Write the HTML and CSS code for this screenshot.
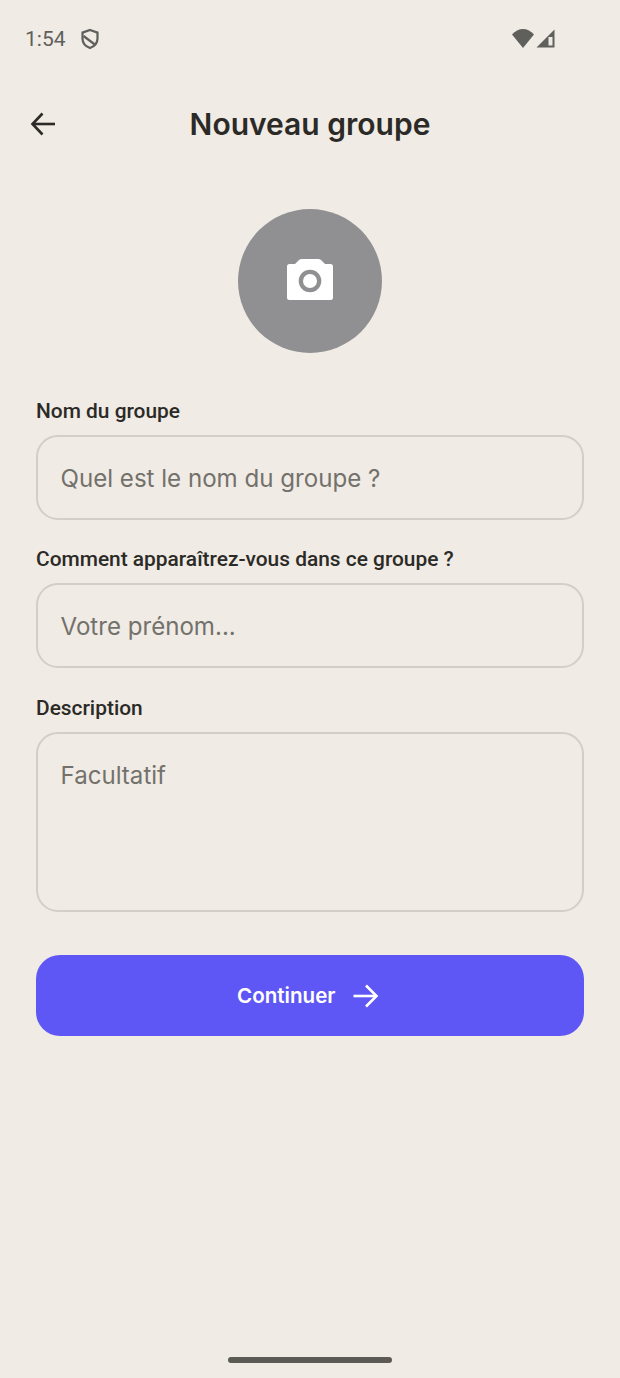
FILE: index.html
```html
<!DOCTYPE html>
<html lang="fr">
<head>
  <meta charset="UTF-8">
  <title>Nouveau groupe</title>
  <meta name="viewport" content="width=device-width, initial-scale=1.0">
  <link rel="stylesheet" href="styles.css">
</head>
<body>
  <div class="screen">

    <div class="status-bar">
      <div class="status-left">
        <span class="clock">1:54</span>
        <svg class="shield" width="20" height="22" viewBox="0 0 20 22" fill="none" stroke="#5f5f5c" stroke-width="2.2">
          <path d="M10 2 L17.5 4.6 V10.5 C17.5 15 14.4 18.4 10 20 C5.6 18.4 2.5 15 2.5 10.5 V4.6 Z"/>
          <path d="M3.5 8 L15.5 17"/>
        </svg>
      </div>
      <div class="status-right">
        <svg width="22" height="19" viewBox="0 0 22 19"><path d="M0 5.5 C3 2 7 0 11 0 C15 0 19 2 22 5.5 L11 19 Z" fill="#5f5f5c"/></svg>
        <svg width="19" height="19" viewBox="0 0 19 19">
          <path d="M18.5 0.5 V18.5 H0.5 Z" fill="#5f5f5c"/>
          <rect x="12.5" y="8" width="4" height="8.5" fill="#f0ebe4"/>
        </svg>
      </div>
    </div>

    <header class="top-bar">
      <button class="back-btn">
        <svg width="26" height="26" viewBox="0 0 26 26" fill="none" stroke="#2b2a27" stroke-width="2.6">
          <path d="M25 13 H3"/>
          <path d="M12.5 2.5 L2.5 13 L12.5 23.5"/>
        </svg>
      </button>
      <h1>Nouveau groupe</h1>
    </header>

    <div class="avatar-wrap">
      <div class="avatar">
        <svg class="camera" width="46" height="41" viewBox="0 0 46 41">
          <path fill-rule="evenodd" fill="#fff" d="M2.5 5 H8 L12 1 Q13 0 15 0 H31 Q33 0 34 1 L38 5 H43.5 Q46 5 46 7.5 V38.5 Q46 41 43.5 41 H2.5 Q0 41 0 38.5 V7.5 Q0 5 2.5 5 Z M23 10.7 A11.3 11.3 0 1 0 23 33.3 A11.3 11.3 0 1 0 23 10.7 Z"/>
          <circle cx="23" cy="22" r="7" fill="#fff"/>
        </svg>
      </div>
    </div>

    <form class="group-form">
      <div class="field">
        <label>Nom du groupe</label>
        <div class="input">Quel est le nom du groupe ?</div>
      </div>
      <div class="field">
        <label>Comment apparaîtrez-vous dans ce groupe ?</label>
        <div class="input">Votre prénom...</div>
      </div>
      <div class="field">
        <label>Description</label>
        <div class="input textarea">Facultatif</div>
      </div>
      <button type="button" class="continue-btn">
        Continuer
        <svg width="30" height="24" viewBox="0 0 30 24" fill="none" stroke="#fff" stroke-width="2.6">
          <path d="M0.5 12 H23"/>
          <path d="M13 1.5 L23.5 12 L13 22.5"/>
        </svg>
      </button>
    </form>

    <div class="home-bar"></div>
  </div>
</body>
</html>
```

FILE: styles.css
```css
body {
  margin: 0;
  background: #f0ebe4;
  font-family: Inter, sans-serif;
  color: #2b2a27;
}

.screen {
  position: relative;
  height: 1378px;
  overflow: hidden;
}

.status-bar {
  display: flex;
  justify-content: space-between;
  align-items: center;
  height: 24px;
  padding: 27px 65px 0 25px;
}

.status-left {
  display: flex;
  align-items: center;
  gap: 14px;
}

.clock {
  font-family: Roboto, sans-serif;
  font-size: 21px;
  color: #5f5f5c;
}

.status-right {
  display: flex;
  align-items: center;
  gap: 2px;
  padding-bottom: 2px;
}

.top-bar {
  position: relative;
  display: flex;
  justify-content: center;
  align-items: center;
  height: 42px;
  margin-top: 52px;
}

.top-bar h1 {
  margin: 0;
  font-size: 30px;
  font-weight: 600;
}

.back-btn {
  position: absolute;
  left: 30px;
  top: 8px;
  padding: 0;
  border: none;
  background: none;
}

.avatar-wrap {
  display: flex;
  justify-content: center;
  margin-top: 64px;
}

.avatar {
  display: flex;
  justify-content: center;
  align-items: center;
  width: 144px;
  height: 144px;
  border-radius: 50%;
  background: #909093;
}

.camera {
  margin-bottom: 4px;
}

.group-form {
  display: flex;
  flex-direction: column;
  gap: 27.75px;
  margin-top: 46px;
  padding: 0 36px;
}

.field label {
  display: block;
  margin-bottom: 12px;
  font-family: Roboto, sans-serif;
  font-size: 20.9px;
  font-weight: 500;
  line-height: 24px;
  color: #2b2a27;
}

.input {
  box-sizing: border-box;
  height: 84.5px;
  padding: 0 22.5px;
  border: 2px solid #d2cec8;
  border-radius: 22px;
  font-size: 24.1px;
  line-height: 83px;
  color: #73716c;
}

.textarea {
  height: 180px;
}

.continue-btn {
  display: flex;
  justify-content: center;
  align-items: center;
  gap: 17.5px;
  height: 81px;
  margin-top: 15.75px;
  border: none;
  border-radius: 24px;
  background: #5f57f5;
  color: #fff;
  font-family: Inter, sans-serif;
  font-size: 20.6px;
  font-weight: 600;
}

.home-bar {
  position: absolute;
  left: 228px;
  bottom: 15px;
  width: 164px;
  height: 6px;
  border-radius: 3px;
  background: #5c5a55;
}
```
